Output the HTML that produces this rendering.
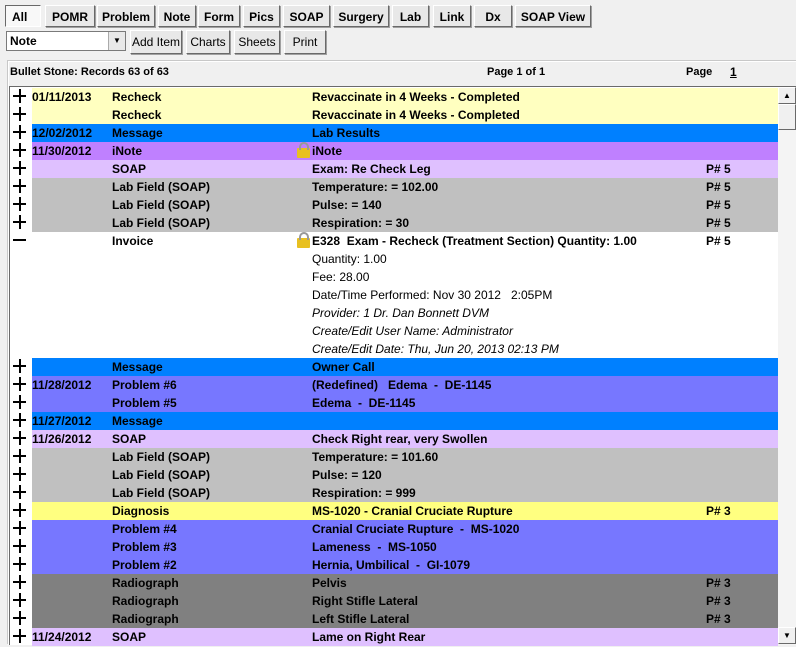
<!DOCTYPE html><html><head><style>
body{margin:0;width:796px;height:644px;overflow:hidden;background:#f0f0f0;font-family:"Liberation Sans",Arial,sans-serif;position:relative}
.b{position:absolute;height:22px;top:5px;background:#e8e8e8;border:1px solid;border-color:#fff #696969 #696969 #fff;box-shadow:1px 1px 0 #a0a0a0;font:bold 12px "Liberation Sans",Arial,sans-serif;text-align:center;line-height:22px;box-sizing:border-box}
.b2{top:30px;height:24px;line-height:22px;font-weight:normal;font-size:12px}
.panel{position:absolute;left:8px;top:61px;width:788px;height:583px;border-top:1px solid #fff;border-left:1px solid #fff;box-shadow:-1px -1px 0 #c8c8c8}
.list{position:absolute;left:9px;top:86px;width:787px;height:558px;background:#fff;border-left:1px solid #6a6a6a;border-top:1px solid #6a6a6a;overflow:hidden}
.r{position:absolute;left:22px;width:746px;height:18px;font:bold 12px "Liberation Sans",Arial,sans-serif;line-height:19px;white-space:nowrap}
.r span{position:absolute}
.d{left:0}.t{left:80px}.s{left:280px}.p{left:674px}
.pl{position:absolute;left:3px;width:14px;height:18px}
.pl:before{content:"";position:absolute;left:0;top:7px;width:13px;height:2px;background:#000}
.pl.x:after{content:"";position:absolute;left:6px;top:1px;width:2px;height:14px;background:#000}
.n{font-weight:normal}.i{font-style:italic;font-weight:normal}
.lk{position:absolute;left:265px;top:6px;width:13px;height:10px;background:#e8c020;border-radius:1px}
.lk:before{content:"";position:absolute;left:2px;top:-6px;width:6px;height:6px;border:2px solid #999;border-bottom:none;border-radius:5px 5px 0 0}
</style></head><body>
<div class="b" style="left:5px;width:36px;background:#f8f8f8;border-color:#696969 #fff #fff #696969;box-shadow:none;text-align:left;padding-left:6px">All</div>
<div class="b" style="left:45px;width:50px">POMR</div>
<div class="b" style="left:97px;width:58px">Problem</div>
<div class="b" style="left:158px;width:38px">Note</div>
<div class="b" style="left:198px;width:42px">Form</div>
<div class="b" style="left:243px;width:37px">Pics</div>
<div class="b" style="left:283px;width:47px">SOAP</div>
<div class="b" style="left:333px;width:56px">Surgery</div>
<div class="b" style="left:392px;width:37px">Lab</div>
<div class="b" style="left:433px;width:38px">Link</div>
<div class="b" style="left:474px;width:38px">Dx</div>
<div class="b" style="left:515px;width:76px">SOAP View</div>
<div style="position:absolute;left:6px;top:31px;width:120px;height:20px;background:#fff;border:1px solid #7a7a7a;box-sizing:border-box;font:bold 12px 'Liberation Sans',Arial;line-height:18px;padding-left:3px">Note<div style="position:absolute;right:0;top:0;width:16px;height:18px;background:#e8e8e8;border-left:1px solid #aaa;font-size:8px;text-align:center;line-height:18px">▼</div></div>
<div class="b b2" style="left:130px;width:52px">Add Item</div>
<div class="b b2" style="left:186px;width:44px">Charts</div>
<div class="b b2" style="left:234px;width:46px">Sheets</div>
<div class="b b2" style="left:284px;width:42px">Print</div>
<div class="panel"></div>
<div style="position:absolute;left:10px;top:66px;font:bold 11px 'Liberation Sans',Arial">Bullet Stone: Records 63 of 63</div>
<div style="position:absolute;left:487px;top:66px;font:bold 11px 'Liberation Sans',Arial">Page 1 of 1</div>
<div style="position:absolute;left:686px;top:66px;font:bold 11px 'Liberation Sans',Arial">Page</div>
<div style="position:absolute;left:730px;top:65px;font:bold 12px 'Liberation Sans',Arial;text-decoration:underline">1</div>
<div class="list">
<div style="position:absolute;left:768px;top:0;width:18px;height:558px;background:#f4f4f4"></div>
<div style="position:absolute;left:768px;top:0;width:18px;height:17px;background:#f0f0f0;border:1px solid;border-color:#fff #696969 #696969 #fff;box-sizing:border-box;font-size:8px;text-align:center;line-height:16px">▲</div>
<div style="position:absolute;left:768px;top:17px;width:18px;height:26px;background:#f0f0f0;border:1px solid;border-color:#fff #696969 #696969 #fff;box-sizing:border-box"></div>
<div style="position:absolute;left:768px;top:540px;width:18px;height:17px;background:#f0f0f0;border:1px solid;border-color:#fff #696969 #696969 #fff;box-sizing:border-box;font-size:8px;text-align:center;line-height:16px">▼</div>
</div>
<div style="position:absolute;left:10px;top:87px">
<div class="r" style="top:1px;background:#ffffc0"><span class="d">01/11/2013</span><span class="t">Recheck</span><span class="s">Revaccinate in 4 Weeks - Completed</span></div>
<div class="r" style="top:19px;background:#ffffc0"><span class="t">Recheck</span><span class="s">Revaccinate in 4 Weeks - Completed</span></div>
<div class="r" style="top:37px;background:#0080ff"><span class="d">12/02/2012</span><span class="t">Message</span><span class="s">Lab Results</span></div>
<div class="r" style="top:55px;background:#bf80ff"><span class="d">11/30/2012</span><span class="t">iNote</span><i class="lk"></i><span class="s">iNote</span></div>
<div class="r" style="top:73px;background:#dfc0ff"><span class="t">SOAP</span><span class="s">Exam: Re Check Leg</span><span class="p">P# 5</span></div>
<div class="r" style="top:91px;background:#c0c0c0"><span class="t">Lab Field (SOAP)</span><span class="s">Temperature: = 102.00</span><span class="p">P# 5</span></div>
<div class="r" style="top:109px;background:#c0c0c0"><span class="t">Lab Field (SOAP)</span><span class="s">Pulse: = 140</span><span class="p">P# 5</span></div>
<div class="r" style="top:127px;background:#c0c0c0"><span class="t">Lab Field (SOAP)</span><span class="s">Respiration: = 30</span><span class="p">P# 5</span></div>
<div class="r" style="top:145px"><span class="t">Invoice</span><i class="lk"></i><span class="s">E328&nbsp; Exam - Recheck (Treatment Section) Quantity: 1.00</span><span class="p">P# 5</span></div>
<div class="r" style="top:163px"><span class="s n">Quantity: 1.00</span></div>
<div class="r" style="top:181px"><span class="s n">Fee: 28.00</span></div>
<div class="r" style="top:199px"><span class="s n">Date/Time Performed: Nov 30 2012 &nbsp; 2:05PM</span></div>
<div class="r" style="top:217px"><span class="s i">Provider: 1 Dr. Dan Bonnett DVM</span></div>
<div class="r" style="top:235px"><span class="s i">Create/Edit User Name: Administrator</span></div>
<div class="r" style="top:253px"><span class="s i">Create/Edit Date: Thu, Jun 20, 2013 02:13 PM</span></div>
<div class="r" style="top:271px;background:#0080ff"><span class="t">Message</span><span class="s">Owner Call</span></div>
<div class="r" style="top:289px;background:#7777ff"><span class="d">11/28/2012</span><span class="t">Problem #6</span><span class="s">(Redefined)&nbsp;&nbsp; Edema&nbsp; -&nbsp; DE-1145</span></div>
<div class="r" style="top:307px;background:#7777ff"><span class="t">Problem #5</span><span class="s">Edema&nbsp; -&nbsp; DE-1145</span></div>
<div class="r" style="top:325px;background:#0080ff"><span class="d">11/27/2012</span><span class="t">Message</span></div>
<div class="r" style="top:343px;background:#dfc0ff"><span class="d">11/26/2012</span><span class="t">SOAP</span><span class="s">Check Right rear, very Swollen</span></div>
<div class="r" style="top:361px;background:#c0c0c0"><span class="t">Lab Field (SOAP)</span><span class="s">Temperature: = 101.60</span></div>
<div class="r" style="top:379px;background:#c0c0c0"><span class="t">Lab Field (SOAP)</span><span class="s">Pulse: = 120</span></div>
<div class="r" style="top:397px;background:#c0c0c0"><span class="t">Lab Field (SOAP)</span><span class="s">Respiration: = 999</span></div>
<div class="r" style="top:415px;background:#ffff80"><span class="t">Diagnosis</span><span class="s">MS-1020 - Cranial Cruciate Rupture</span><span class="p">P# 3</span></div>
<div class="r" style="top:433px;background:#7777ff"><span class="t">Problem #4</span><span class="s">Cranial Cruciate Rupture&nbsp; -&nbsp; MS-1020</span></div>
<div class="r" style="top:451px;background:#7777ff"><span class="t">Problem #3</span><span class="s">Lameness&nbsp; -&nbsp; MS-1050</span></div>
<div class="r" style="top:469px;background:#7777ff"><span class="t">Problem #2</span><span class="s">Hernia, Umbilical&nbsp; -&nbsp; GI-1079</span></div>
<div class="r" style="top:487px;background:#808080"><span class="t">Radiograph</span><span class="s">Pelvis</span><span class="p">P# 3</span></div>
<div class="r" style="top:505px;background:#808080"><span class="t">Radiograph</span><span class="s">Right Stifle Lateral</span><span class="p">P# 3</span></div>
<div class="r" style="top:523px;background:#808080"><span class="t">Radiograph</span><span class="s">Left Stifle Lateral</span><span class="p">P# 3</span></div>
<div class="r" style="top:541px;background:#dfc0ff"><span class="d">11/24/2012</span><span class="t">SOAP</span><span class="s">Lame on Right Rear</span></div>
<div class="pl x" style="top:1px"></div><div class="pl x" style="top:19px"></div><div class="pl x" style="top:37px"></div><div class="pl x" style="top:55px"></div><div class="pl x" style="top:73px"></div><div class="pl x" style="top:91px"></div><div class="pl x" style="top:109px"></div><div class="pl x" style="top:127px"></div><div class="pl" style="top:145px"></div>
<div class="pl x" style="top:271px"></div><div class="pl x" style="top:289px"></div><div class="pl x" style="top:307px"></div><div class="pl x" style="top:325px"></div><div class="pl x" style="top:343px"></div><div class="pl x" style="top:361px"></div><div class="pl x" style="top:379px"></div><div class="pl x" style="top:397px"></div><div class="pl x" style="top:415px"></div><div class="pl x" style="top:433px"></div><div class="pl x" style="top:451px"></div><div class="pl x" style="top:469px"></div><div class="pl x" style="top:487px"></div><div class="pl x" style="top:505px"></div><div class="pl x" style="top:523px"></div><div class="pl x" style="top:541px"></div>
</div>
</body></html>
